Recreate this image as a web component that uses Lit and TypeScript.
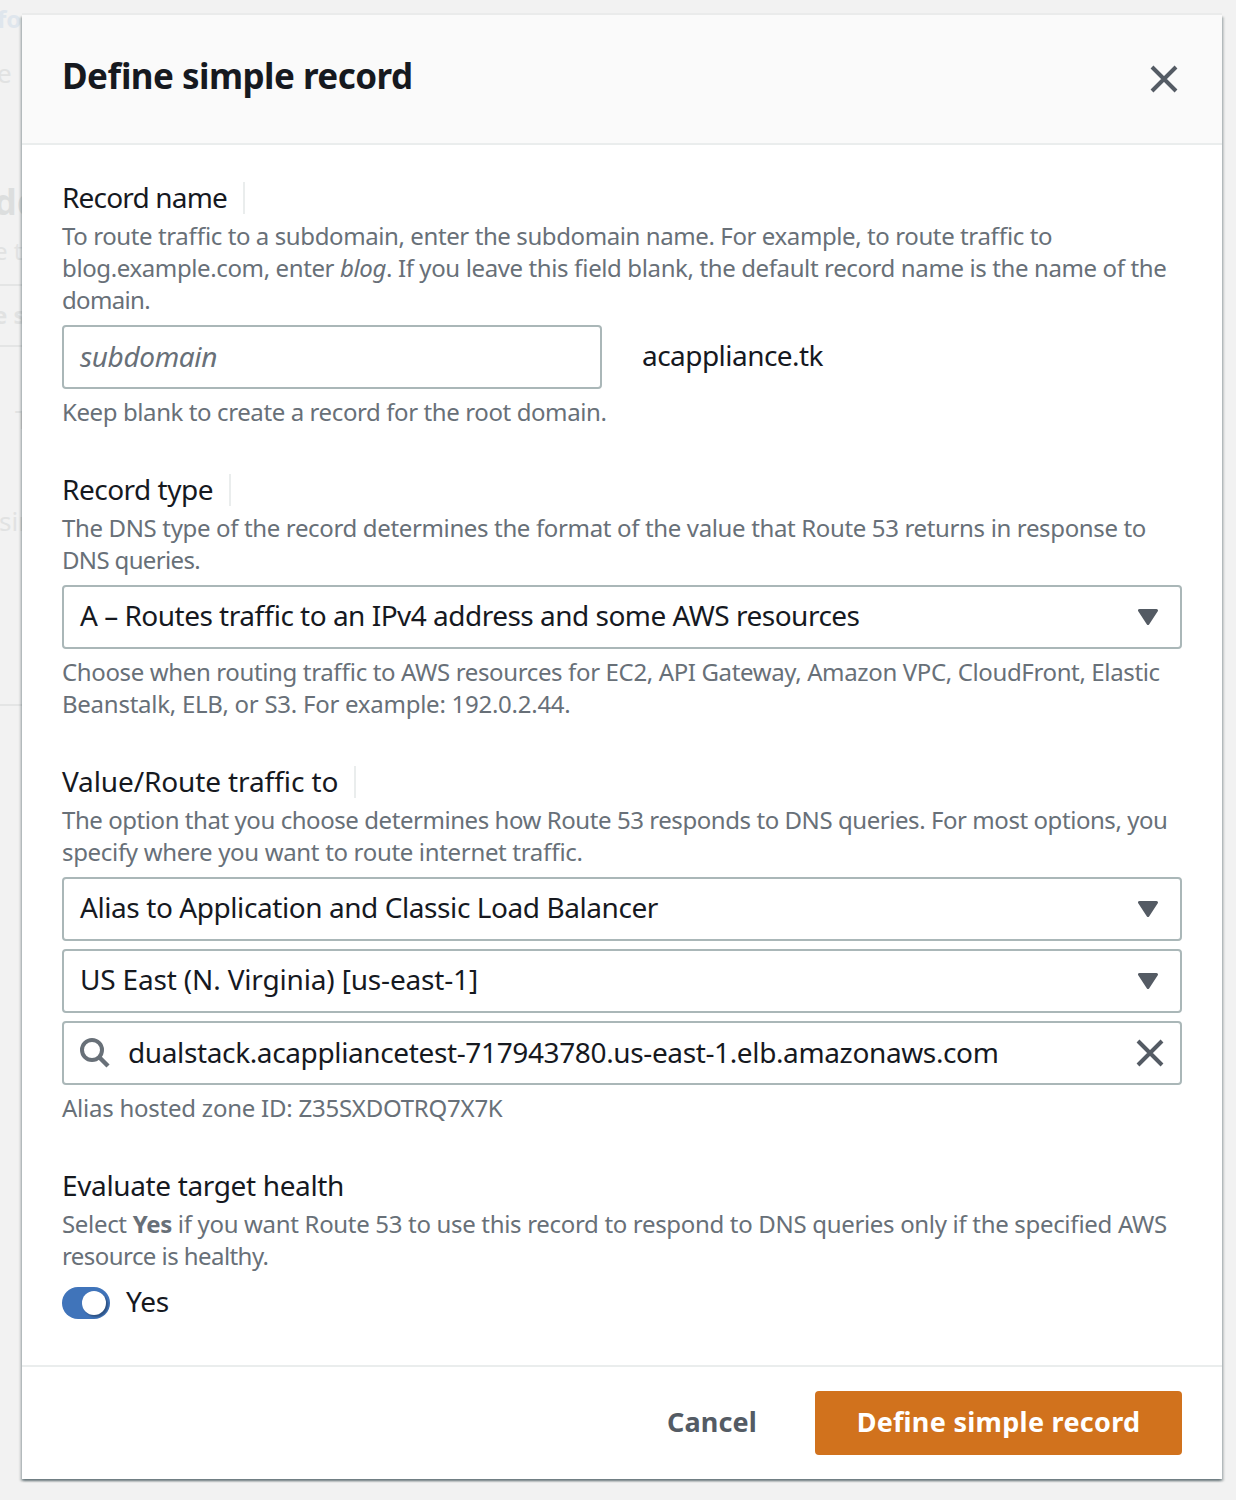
import { LitElement, html, css, svg } from "lit";
import { customElement, property } from "lit/decorators.js";

/** One line of copy whose tracking is adjusted so that it fills a given measure. */
@customElement("text-line")
class TextLine extends LitElement {
  @property({ type: Number }) measure = 0;

  static styles = css`
    :host {
      display: block;
      width: max-content;
      white-space: pre;
      font-feature-settings: "liga" 1;
    }
  `;

  firstUpdated() {
    const count = (this.textContent ?? "").length;
    if (!this.measure || !count) return;
    const natural = this.getBoundingClientRect().width;
    this.style.letterSpacing = `${(this.measure - natural) / count}px`;
  }

  render() {
    return html`<slot></slot>`;
  }
}

const cross = svg`<path d="M2 2 26 26M26 2 2 26" fill="none" stroke="#545b64" stroke-width="4"/>`;

@customElement("select-box")
class SelectBox extends LitElement {
  @property() text = "";
  @property({ type: Number }) measure = 0;

  static styles = css`
    :host {
      display: flex;
      align-items: center;
      justify-content: space-between;
      box-sizing: border-box;
      height: 64px;
      padding: 0 22px 4px 16px;
      border: 2px solid #aab7b8;
      border-radius: 4px;
      background: #fff;
      font-size: 28px;
      line-height: 32px;
      color: #16191f;
    }
    .caret {
      width: 20px;
      height: 16px;
      margin-top: 4px;
    }
  `;

  render() {
    return html`
      <text-line .measure=${this.measure}>${this.text}</text-line>
      <svg class="caret" viewBox="0 0 20 16">
        <path d="M1.5 1.5h17L10 14.5z" fill="#545b64" stroke="#545b64" stroke-width="3" stroke-linejoin="round"/>
      </svg>
    `;
  }
}

@customElement("app-root")
class AppRoot extends LitElement {
  static styles = css`
    :host {
      display: flex;
      box-sizing: border-box;
      width: 1236px;
      height: 1500px;
      background: #f2f2f2;
      overflow: hidden;
      font-family: "Noto Sans", "Open Sans", sans-serif;
    }
    .backdrop {
      display: flex;
      flex-direction: column;
      width: 22px;
      flex: none;
      overflow: hidden;
      color: #e1e2e2;
      font-size: 26px;
      line-height: 36px;
    }
    .ghost {
      height: 36px;
      white-space: pre;
    }
    .g-info {
      margin: 1px 0 0 -3px;
      font-weight: 700;
      font-size: 24px;
      color: #dfe6ed;
    }
    .g-lead { margin: 18px 0 0 -3px; }
    .g-title {
      margin: 93px 0 0 -6px;
      font-size: 36px;
      font-weight: 700;
      color: #dcdede;
    }
    .g-sub { margin: 13px 0 0 -6px; font-size: 24px; }
    .rule { height: 2px; background: #e4e5e5; }
    .r1 { margin-top: 15px; }
    .g-tab { margin: 11px 0 0 -7px; font-weight: 700; font-size: 24px; }
    .r2 { margin-top: 12px; }
    .g-type { margin: 54px 0 0 15px; }
    .g-row { margin: 66px 0 0 -1px; font-size: 26px; }
    .r3 { margin-top: 165px; }
    .modal {
      position: relative;
      display: flex;
      flex-direction: column;
      box-sizing: border-box;
      width: 1200px;
      height: 1464px;
      margin-top: 15px;
      background: #fff;
      box-shadow: 0 -2px 0 #eaebeb, 0 2px 2px rgba(0, 28, 36, 0.35),
        2px 2px 2px rgba(0, 28, 36, 0.18), -2px 2px 2px rgba(0, 28, 36, 0.18);
    }
    .header {
      display: flex;
      justify-content: space-between;
      box-sizing: border-box;
      height: 130px;
      padding: 37px 44px 0 40px;
      background: #fafafa;
      border-bottom: 2px solid #eaeded;
    }
    .title {
      margin: 0;
      font-size: 35px;
      font-weight: 700;
      line-height: 48px;
      color: #16191f;
    }
    .close { width: 28px; height: 28px; margin-top: 13px; }
    .body {
      flex: 1;
      padding: 36px 40px 0;
      font-size: 24px;
      line-height: 32px;
      color: #687078;
    }
    .field { margin-bottom: 45px; }
    .label {
      display: flex;
      height: 32px;
      margin-bottom: 7px;
      font-size: 28px;
      color: #16191f;
    }
    .sep {
      width: 2px;
      height: 32px;
      margin: 1px 0 0 16px;
      background: #eaeded;
    }
    .help { margin-bottom: 9px; }
    .caption { margin-top: 7px; }
    .inline { display: flex; align-items: center; gap: 40px; }
    .input {
      display: flex;
      align-items: center;
      box-sizing: border-box;
      width: 540px;
      height: 64px;
      padding: 0 16px 2px;
      border: 2px solid #aab7b8;
      border-radius: 4px;
      font-size: 28px;
      font-style: italic;
    }
    .suffix { font-size: 28px; color: #16191f; padding-bottom: 4px; }
    .stack { display: grid; gap: 8px; }
    .search {
      display: flex;
      align-items: center;
      box-sizing: border-box;
      height: 64px;
      padding: 0 16px;
      border: 2px solid #aab7b8;
      border-radius: 4px;
      font-size: 28px;
      color: #16191f;
    }
    .search text-line { padding-bottom: 2px; }
    .glass { width: 32px; height: 32px; margin: 2px 16px 0 0; }
    .clear { width: 28px; height: 28px; margin-left: auto; }
    .switch-row {
      display: flex;
      align-items: center;
      gap: 16px;
      margin-top: 15px;
      font-size: 28px;
      color: #16191f;
    }
    .switch {
      display: flex;
      justify-content: flex-end;
      box-sizing: border-box;
      width: 48px;
      height: 32px;
      padding: 4px;
      border-radius: 16px;
      background: #4074ba;
    }
    .knob {
      width: 24px;
      height: 24px;
      border-radius: 50%;
      background: #fff;
      box-shadow: 2px 2px 2px rgba(0, 0, 0, 0.3);
    }
    .yes { margin-top: -4px; }
    .footer {
      display: flex;
      justify-content: flex-end;
      align-items: center;
      box-sizing: border-box;
      height: 114px;
      padding-right: 40px;
      border-top: 2px solid #eaeded;
      font-size: 27px;
      font-weight: 700;
      line-height: 32px;
    }
    .cancel { margin-right: 58px; padding-bottom: 3px; color: #545b64; }
    .submit {
      display: flex;
      align-items: center;
      justify-content: center;
      box-sizing: border-box;
      width: 367px;
      height: 64px;
      padding-bottom: 3px;
      border-radius: 4px;
      background: #d1721d;
      color: #fff;
    }
  `;

  render() {
    return html`
      <div class="backdrop" aria-hidden="true">
        <div class="ghost g-info">fo</div>
        <div class="ghost g-lead">e</div>
        <div class="ghost g-title">dd</div>
        <div class="ghost g-sub">e t</div>
        <div class="rule r1"></div>
        <div class="ghost g-tab">e s</div>
        <div class="rule r2"></div>
        <div class="ghost g-type">T</div>
        <div class="ghost g-row">sin</div>
        <div class="rule r3"></div>
      </div>
      <section class="modal">
        <header class="header">
          <h1 class="title"><text-line measure="350">Define simple record</text-line></h1>
          <svg class="close" viewBox="0 0 28 28">${cross}</svg>
        </header>
        <div class="body">
          <div class="field">
            <div class="label"><text-line measure="165">Record name</text-line><span class="sep"></span></div>
            <div class="help">
              <text-line measure="988.5">To route traffic to a subdomain, enter the subdomain name. For example, to route traffic to</text-line>
              <text-line measure="1104">blog.example.com, enter <i>blog</i>. If you leave this field blank, the default record name is the name of the</text-line>
              <text-line measure="88">domain.</text-line>
            </div>
            <div class="inline">
              <div class="input"><text-line measure="137">subdomain</text-line></div>
              <div class="suffix"><text-line measure="181">acappliance.tk</text-line></div>
            </div>
            <div class="caption"><text-line measure="544.5">Keep blank to create a record for the root domain.</text-line></div>
          </div>
          <div class="field">
            <div class="label"><text-line measure="151">Record type</text-line><span class="sep"></span></div>
            <div class="help">
              <text-line measure="1084">The DNS type of the record determines the format of the value that Route 53 returns in response to</text-line>
              <text-line measure="138">DNS queries.</text-line>
            </div>
            <select-box measure="778.5" text="A – Routes traffic to an IPv4 address and some AWS resources"></select-box>
            <div class="caption">
              <text-line measure="1097">Choose when routing traffic to AWS resources for EC2, API Gateway, Amazon VPC, CloudFront, Elastic</text-line>
              <text-line measure="508.5">Beanstalk, ELB, or S3. For example: 192.0.2.44.</text-line>
            </div>
          </div>
          <div class="field">
            <div class="label"><text-line measure="276">Value/Route traffic to</text-line><span class="sep"></span></div>
            <div class="help">
              <text-line measure="1105.5">The option that you choose determines how Route 53 responds to DNS queries. For most options, you</text-line>
              <text-line measure="520">specify where you want to route internet traffic.</text-line>
            </div>
            <div class="stack">
              <select-box measure="578" text="Alias to Application and Classic Load Balancer"></select-box>
              <select-box measure="398" text="US East (N. Virginia) [us-east-1]"></select-box>
              <div class="search">
                <svg class="glass" viewBox="0 0 32 32">
                  <circle cx="12" cy="12" r="10" fill="none" stroke="#687078" stroke-width="4"/>
                  <path d="M19 19 28 28" stroke="#687078" stroke-width="4.4"/>
                </svg>
                <text-line measure="870.5">dualstack.acappliancetest-717943780.us-east-1.elb.amazonaws.com</text-line>
                <svg class="clear" viewBox="0 0 28 28">${cross}</svg>
              </div>
            </div>
            <div class="caption"><text-line measure="440.5">Alias hosted zone ID: Z35SXDOTRQ7X7K</text-line></div>
          </div>
          <div class="field">
            <div class="label"><text-line measure="282">Evaluate target health</text-line></div>
            <text-line measure="1104.5">Select <b>Yes</b> if you want Route 53 to use this record to respond to DNS queries only if the specified AWS</text-line>
            <text-line measure="206.5">resource is healthy.</text-line>
            <div class="switch-row">
              <span class="switch"><span class="knob"></span></span>
              <text-line class="yes" measure="43">Yes</text-line>
            </div>
          </div>
        </div>
        <footer class="footer">
          <text-line class="cancel" measure="90">Cancel</text-line>
          <div class="submit"><text-line measure="284">Define simple record</text-line></div>
        </footer>
      </section>
    `;
  }
}
